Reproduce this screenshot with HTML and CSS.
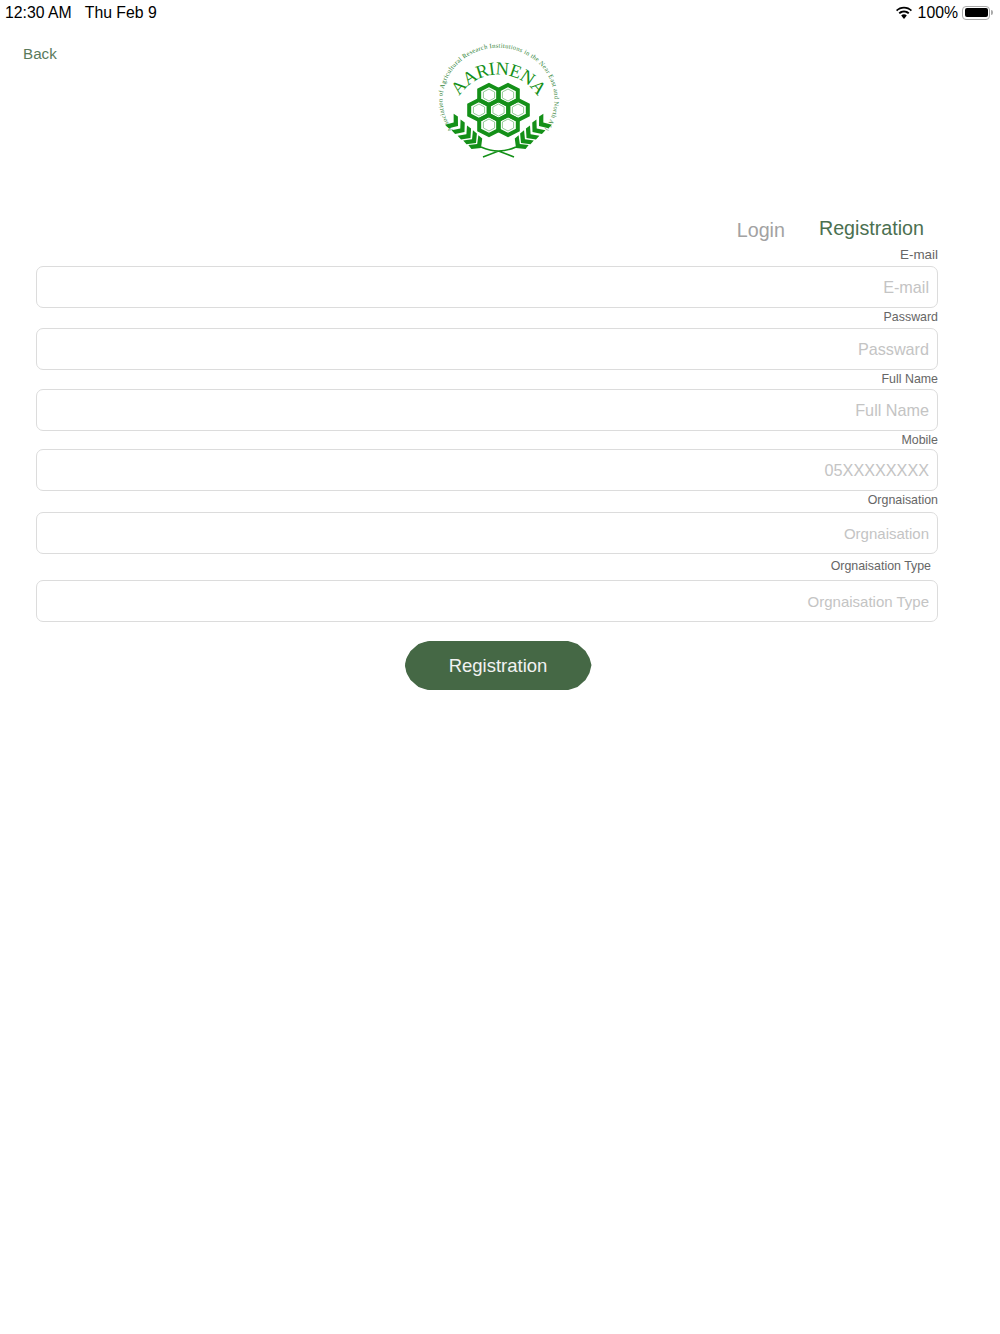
FILE: index.html
```html
<!DOCTYPE html>
<html lang="en">

<head>
    <meta charset="UTF-8">
    <title>AARINENA Registration</title>
    <link rel="stylesheet" href="styles.css">
</head>

<body>

    <div class="status-bar">
        <div class="status-left">
            <span>12:30 AM</span>
            <span>Thu Feb 9</span>
        </div>
        <div class="status-right">
            <svg class="wifi" width="18" height="14" viewBox="0 0 18 14" fill="#000">
                <path d="M9 2.600c2.600 0 5 1 6.800 2.700l1.200-1.300C14.900 1.900 12.100.7 9 .7S3.100 1.900 1 4l1.200 1.300C4 3.600 6.400 2.600 9 2.600z" />
                <path d="M9 6.400c1.600 0 3 .6 4.100 1.600l1.300-1.300C13 5.300 11.100 4.500 9 4.500S5 5.300 3.600 6.700L4.900 8C6 7 7.400 6.400 9 6.400z" />
                <path d="M9 8.300c-1.100 0-2 .4-2.800 1.100L9 13l2.800-3.600C11 8.700 10.100 8.300 9 8.300z" />
            </svg>
            <span>100%</span>
            <div class="battery">
                <div class="battery-fill"></div>
            </div>
            <div class="battery-tip"></div>
        </div>
    </div>

    <div class="header">
        <a class="back">Back</a>
        <svg class="logo" width="126" height="120" viewBox="0 0 126 120">
            <defs>
                <path id="outerArc" d="M18 90A56 52 0 1 1 109 90" />
                <path id="nameArc" d="M24 57A46 46 0 0 1 103 57" />
                <g id="hex">
                    <polygon points="0,-10 9.800,-5 9.800,5 0,10 -9.800,5 -9.800,-5" fill="none" stroke="#149018" stroke-width="4" />
                    <polygon points="0,-6 5.600,-3 5.600,3 0,6 -5.600,3 -5.600,-3" fill="none" stroke="#79bf7c" stroke-width="0.800" />
                </g>
                <polygon id="chev" points="0,0 -6,-7.500 -11,-7 -5.500,0 -11,7 -6,7.500" fill="#149018" />
                <g id="laurel">
                    <use href="#chev" transform="translate(23 86) rotate(38)" />
                    <use href="#chev" transform="translate(29.500 92) rotate(40)" />
                    <use href="#chev" transform="translate(35.500 98) rotate(42)" />
                    <use href="#chev" transform="translate(41 103) rotate(44)" />
                    <use href="#chev" transform="translate(46 108) rotate(46)" />
                </g>
            </defs>
            <text class="logo-small"><textPath href="#outerArc" textLength="240">Association of Agricultural Research Institutions in the Near East and North Africa</textPath></text>
            <text class="logo-name"><textPath href="#nameArc" textLength="93" startOffset="1">AARINENA</textPath></text>
            <use href="#hex" x="54" y="55" />
            <use href="#hex" x="73" y="55" />
            <use href="#hex" x="44" y="70" />
            <use href="#hex" x="63.500" y="70" />
            <use href="#hex" x="83" y="70" />
            <use href="#hex" x="54" y="85" />
            <use href="#hex" x="73" y="85" />
            <use href="#laurel" />
            <use href="#laurel" transform="translate(127 0) scale(-1 1)" />
            <path d="M46 107Q55 111 63.500 111T81 107M48 117L63.500 111L79 117" fill="none" stroke="#149018" stroke-width="1.600" />
        </svg>
    </div>

    <div class="tabs">
        <div class="tab">Login</div>
        <div class="tab active">Registration</div>
    </div>

    <form class="form">
        <div class="field field-email">
            <label>E-mail</label>
            <input type="text" placeholder="E-mail">
        </div>
        <div class="field">
            <label>Passward</label>
            <input type="text" placeholder="Passward">
        </div>
        <div class="field field-name">
            <label>Full Name</label>
            <input type="text" placeholder="Full Name">
        </div>
        <div class="field field-mobile">
            <label>Mobile</label>
            <input type="text" placeholder="05XXXXXXXX">
        </div>
        <div class="field field-org">
            <label>Orgnaisation</label>
            <input type="text" placeholder="Orgnaisation">
        </div>
        <div class="field field-org-type">
            <label>Orgnaisation Type</label>
            <input type="text" placeholder="Orgnaisation Type">
        </div>
        <div class="submit-row">
            <button type="button" class="submit">Registration</button>
        </div>
    </form>

</body>

</html>
```

FILE: styles.css
```css
body {
    margin: 0;
    background-color: white;
    color: #000;
    font-family: "Liberation Sans", Arial, sans-serif;
}

.status-bar {
    display: flex;
    justify-content: space-between;
    align-items: center;
    height: 25px;
    padding: 0 7px 0 5px;
    font-size: 15.800px;
}

.status-left {
    display: flex;
    gap: 13px;
}

.status-right {
    display: flex;
    align-items: center;
}

.wifi {
    margin-right: 5px;
}

.battery {
    box-sizing: border-box;
    width: 28px;
    height: 14px;
    padding: 1.500px;
    margin-left: 4px;
    border: 1.500px solid #aaa;
    border-radius: 4px;
}

.battery-fill {
    height: 100%;
    background: #000;
    border-radius: 2px;
}

.battery-tip {
    width: 2px;
    height: 5px;
    margin-left: 1px;
    background: #aaa;
    border-radius: 0 2px 2px 0;
}

.header {
    display: grid;
    grid-template-columns: 1fr 126px 1fr;
    height: 190px;
    padding-left: 23px;
    padding-right: 27px;
}

.back {
    padding-top: 20px;
    font-size: 15.200px;
    color: #5a7a5c;
}

.logo {
    margin-top: 15px;
}

.logo-small {
    font-family: "Liberation Serif", serif;
    font-size: 6.500px;
    fill: #2f7f35;
}

.logo-name {
    font-family: "Liberation Serif", serif;
    font-size: 18.500px;
    fill: #149018;
}

.tabs {
    display: flex;
    justify-content: flex-end;
    gap: 34px;
    padding-right: 76px;
    height: 32px;
    padding-top: 2px;
    box-sizing: border-box;
    font-size: 19.700px;
}

.tab {
    margin-top: 2px;
    color: #a2a2a2;
}

.tab.active {
    margin-top: 0;
    color: #4b7050;
}

.form {
    margin: 0 62px 0 36px;
}

.field {
    display: flex;
    flex-direction: column;
    align-items: flex-end;
    margin-top: 1px;
}

.field.field-email {
    margin-top: 0;
}

.field.field-org-type {
    margin-top: 4px;
}

.field label {
    height: 16px;
    line-height: 16px;
    margin-bottom: 3px;
    font-size: 12.400px;
    color: #666;
}

.field.field-email label {
    font-size: 13.400px;
}

.field.field-name label {
    margin-bottom: 2px;
}

.field.field-mobile label {
    margin-bottom: 1px;
}

.field.field-org label {
    margin-bottom: 4px;
}

.field.field-org-type label {
    margin-bottom: 6px;
    padding-right: 7px;
}

.field input {
    width: 100%;
    height: 42px;
    box-sizing: border-box;
    padding: 0 8px;
    border: 1px solid #dcdcdc;
    border-radius: 7px;
    text-align: right;
    font-family: "Liberation Sans", Arial, sans-serif;
    font-size: 16.200px;
    background: white;
}

.field.field-org input,
.field.field-org-type input {
    font-size: 15px;
}

.field input::placeholder {
    color: #c4c4c4;
    opacity: 1;
}

.submit-row {
    display: flex;
    justify-content: center;
    margin-top: 19px;
    padding-left: 22px;
}

.submit {
    width: 187px;
    height: 49px;
    border: none;
    border-radius: 25px;
    background-color: #456845;
    color: #f2f2f2;
    font-family: "Liberation Sans", Arial, sans-serif;
    font-size: 18.500px;
    clip-path: polygon(23px 0, calc(100% - 23px) 0, calc(100% - 14px) 3px, calc(100% - 6px) 10px, calc(100% - 2px) 17px, 100% 24px, calc(100% - 2px) 32px, calc(100% - 6px) 39px, calc(100% - 14px) 46px, calc(100% - 23px) 100%, 23px 100%, 14px 46px, 6px 39px, 2px 32px, 0 24px, 2px 17px, 6px 10px, 14px 3px);
}
```
